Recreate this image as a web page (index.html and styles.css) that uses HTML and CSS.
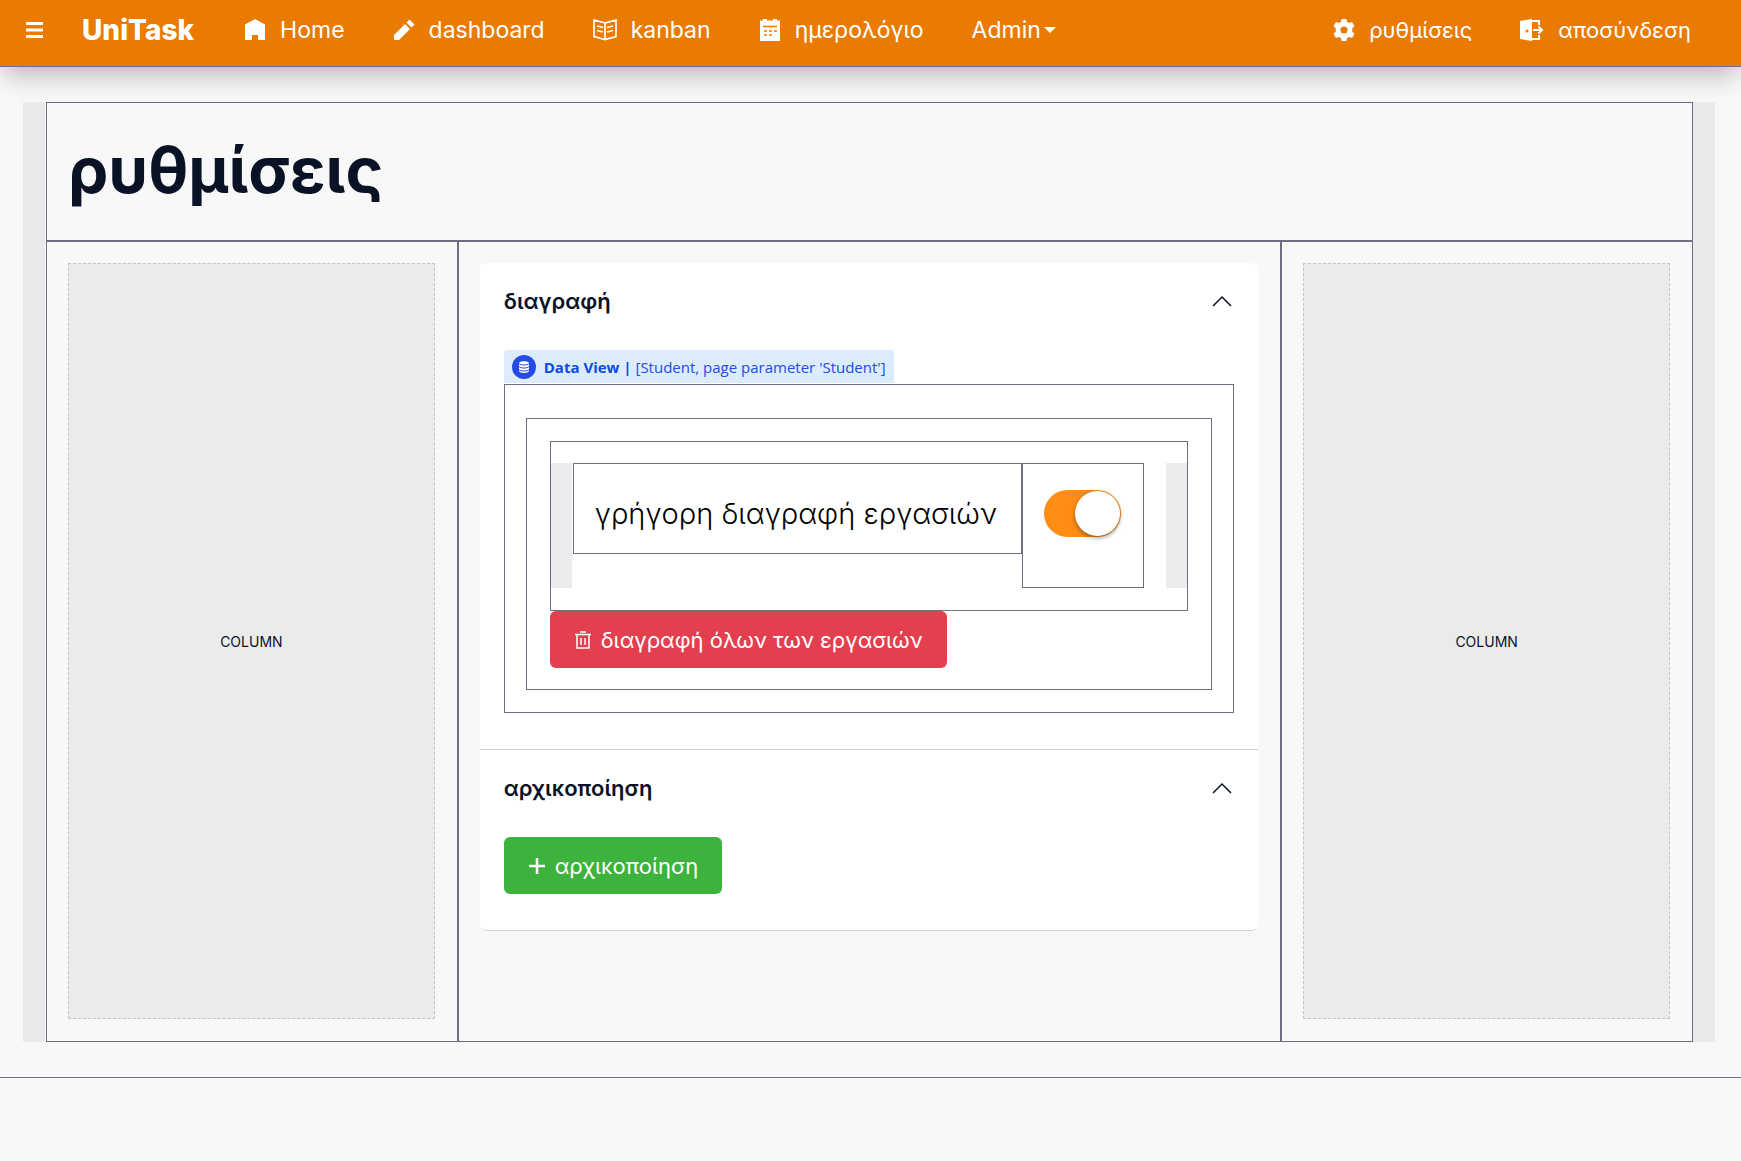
FILE: index.html
```html
<!DOCTYPE html>
<html lang="el">
<head>
<meta charset="utf-8">
<meta name="viewport" content="width=device-width, initial-scale=1">
<title>UniTask</title>
<link rel="stylesheet" href="styles.css">
</head>
<body>
<header class="topbar">
  <button class="menu-button" type="button" aria-label="Menu">
    <svg width="18" height="18" viewBox="0 0 18 18" fill="#fff"><path d="M0 1h17v3H0zM0 7.500h17v3H0zM0 14h17v3H0z"/></svg>
  </button>
  <a class="brand" href="#">UniTask</a>
  <nav class="nav">
    <a class="nav-link" href="#">
      <svg class="icon" viewBox="0 0 22 22" fill="#fff"><path d="M11 0L21 5.500V21h-7v-5H8v5H1V5.500z"/></svg>
      Home</a>
    <a class="nav-link" href="#">
      <svg class="icon" viewBox="0 0 22 22" fill="#fff"><path d="M1 21v-5L12 5l5 5L6 21zM13.500 3.500L16.500.500l5 5-3 3z"/></svg>
      dashboard</a>
    <a class="nav-link" href="#">
      <svg class="icon icon-wide" viewBox="0 0 24 22" fill="none" stroke="#fff" stroke-width="1.700"><path d="M12 4L1 1v16.500l11 3 11-3V1zM12 4v16.500M4 7l6 1.500M4 11.500L10 13M20 7l-6 1.500M20 11.500L14 13"/></svg>
      kanban</a>
    <a class="nav-link" href="#">
      <svg class="icon" viewBox="0 0 22 22"><path fill="#fff" d="M1 1.500h3V0h4v1.500h6V0h4v1.500h3V22H1z"/><path stroke="#e97b02" stroke-width="1.500" d="M4 7.500h14M5 12h3M10 12h3M15 12h3M5 16h3M10 16h3"/></svg>
      ημερολόγιο</a>
    <a class="nav-link nav-drop" href="#">Admin<svg width="12" height="6" viewBox="0 0 12 6" fill="#fff"><path d="M0 0h12L6 6z"/></svg></a>
  </nav>
  <nav class="nav nav-end">
    <a class="nav-link" href="#">
      <svg class="icon" viewBox="0 0 22 22" fill="#fff" fill-rule="evenodd"><path d="M8.500 0h5l.6 3 2 1.100 2.900-1 2.500 4.200-2.200 2v3.400l2.200 2-2.500 4.200-2.900-1-2 1.100-.6 3h-5l-.6-3-2-1.100-2.900 1L.5 14.700l2.200-2V9.300l-2.200-2L3 3.100l2.900 1L7.900 3zM11 7.500a3.500 3.500 0 1 0 0 7 3.500 3.500 0 0 0 0-7z"/></svg>
      ρυθμίσεις</a>
    <a class="nav-link" href="#">
      <svg class="icon icon-wide" viewBox="0 0 24 22"><path fill="#fff" fill-rule="evenodd" d="M0 2L12 0v22L0 20zM7 10.500a1.500 1.500 0 1 0 0 3 1.500 1.500 0 0 0 0-3z"/><path fill="none" stroke="#fff" stroke-width="2" d="M12 2h7v4M12 20h7v-4M13 11h9M18.500 7.500L22 11l-3.500 3.500"/></svg>
      αποσύνδεση</a>
  </nav>
</header>

<main class="page">
  <div class="layout">
    <section class="cell title-cell"><h1 class="title">ρυθμίσεις</h1></section>
    <section class="cell"><div class="placeholder">COLUMN</div></section>
    <section class="cell">
      <div class="card">
        <div class="panel">
          <button class="panel-head" type="button" aria-expanded="true">διαγραφή
            <svg class="chevron" viewBox="0 0 20 12"><path d="M1 11l9-9 9 9"/></svg></button>
          <div class="panel-body">
            <div class="view-tag">
              <svg width="24" height="24" viewBox="0 0 24 24"><circle cx="12" cy="12" r="12" fill="#264ae5"/><path fill="#fff" d="M7 8c0-2.500 10-2.500 10 0v8c0 2.500-10 2.500-10 0z"/><path fill="none" stroke="#264ae5" d="M7 8.500c1 2 9 2 10 0M7 11.500c1 2 9 2 10 0M7 14.500c1 2 9 2 10 0"/></svg>
              <span><b>Data View |</b> [Student, page parameter 'Student']</span>
            </div>
            <div class="view">
              <div class="view-inner">
                <div class="row">
                  <div class="row-cell label-cell"><label for="quick">γρήγορη διαγραφή εργασιών</label></div>
                  <div class="row-cell toggle-cell"><input class="toggle" id="quick" type="checkbox" role="switch" checked></div>
                </div>
                <button class="button danger" type="button">
                  <svg width="16" height="18" viewBox="0 0 16 18" fill="none" stroke="#fff" stroke-width="1.500"><path d="M0 3.500h16M5 1h6M2 3.500v13.500h12V3.500M6 7v7M10 7v7"/></svg>
                  διαγραφή όλων των εργασιών</button>
              </div>
            </div>
          </div>
        </div>
        <div class="panel">
          <button class="panel-head" type="button" aria-expanded="true">αρχικοποίηση
            <svg class="chevron" viewBox="0 0 20 12"><path d="M1 11l9-9 9 9"/></svg></button>
          <div class="panel-body">
            <button class="button success" type="button">
              <svg width="16" height="16" viewBox="0 0 16 16" stroke="#fff" stroke-width="2.500"><path d="M8 0v16M0 8h16"/></svg>
              αρχικοποίηση</button>
          </div>
        </div>
      </div>
    </section>
    <section class="cell"><div class="placeholder">COLUMN</div></section>
  </div>
</main>
</body>
</html>
```
FILE: styles.css
```css
* { box-sizing: border-box; }

body {
  margin: 0;
  min-height: 100vh;
  background: #f8f8f8;
  color: #0a1325;
  font-family: Inter, "Noto Sans", sans-serif;
  font-size: 22px;
}

a { color: inherit; text-decoration: none; }
button { font: inherit; color: inherit; border: 0; cursor: pointer; }
svg { flex: none; }

/* Top bar */
.topbar {
  position: relative;
  display: flex;
  align-items: center;
  height: 67px;
  padding: 0 50px 6px 26px;
  background: #e97b02;
  border-bottom: 1px solid #6c7080;
  box-shadow: 0 10px 28px -4px rgba(0, 0, 0, 0.3);
  color: #fff;
}
.menu-button { display: flex; padding: 0; background: none; }
.brand { margin: 0 50px 0 38px; font-size: 28px; font-weight: 800; }
.nav { display: flex; gap: 48px; font-size: 23px; }
.nav-end { margin-left: auto; font-size: 22px; }
.nav-link { display: flex; align-items: center; gap: 14px; white-space: nowrap; }
.nav-drop { gap: 3px; }
.icon { width: 22px; height: 22px; }
.icon-wide { width: 24px; }

/* Page frame */
.page {
  padding: 35px 26px 35px 23px;
  border-bottom: 1px solid #6c7080;
}
.layout {
  display: grid;
  grid-template-columns: 1fr 2fr 1fr;
  grid-template-rows: 139px minmax(801px, auto);
  padding: 0 22px 0 23px;
  background:
    linear-gradient(#e8eaec, #e8eaec) left / 22px 100% no-repeat,
    linear-gradient(#e8eaec, #e8eaec) right / 22px 100% no-repeat;
}
.cell { min-width: 0; padding: 21px 22px 22px 21px; border: 1px solid #6c7080; }
.title-cell { grid-column: 1 / -1; }
.title { margin: 0; font-size: 64px; line-height: 92px; font-weight: 700; }
.placeholder {
  display: flex;
  align-items: center;
  justify-content: center;
  height: 100%;
  border: 1px dashed #c4c5c9;
  background: #ebebeb;
  font-size: 14px;
}

/* Accordion card */
.card { border-radius: 6px; background: #fff; overflow: hidden; }
.panel { border-bottom: 1px solid #ced0d3; }
.panel:last-child { border-radius: 0 0 6px 6px; }
.panel-head {
  display: flex;
  align-items: center;
  justify-content: space-between;
  width: 100%;
  height: 76px;
  padding: 0 26px 0 24px;
  background: none;
  font-weight: 600;
}
.chevron { width: 20px; height: 12px; fill: none; stroke: #0a1325; stroke-width: 1.500; }
.panel-body { padding: 11px 24px 36px; }
.view-tag {
  display: flex;
  align-items: center;
  gap: 8px;
  width: fit-content;
  height: 33px;
  margin-bottom: 1px;
  padding: 0 8px;
  border-radius: 3px 3px 0 0;
  background: #dcecfd;
  color: #264ae5;
  font-family: "Open Sans", "Noto Sans", sans-serif;
  font-size: 15px;
  white-space: nowrap;
}
.view-tag b { color: #0a4be0; }
.view { padding: 33px 21px 22px; border: 1px solid #6c7080; }
.view-inner { padding: 22px 23px 21px; border: 1px solid #6c7080; }
.row {
  display: flex;
  align-items: flex-start;
  padding: 21px 43px 22px 22px;
  border: 1px solid #6c7080;
  background:
    linear-gradient(#ebecee, #ebecee) left 21px / 21px 125px no-repeat,
    linear-gradient(#ebecee, #ebecee) right 21px / 21px 125px no-repeat;
}
.row-cell { border: 1px solid #6c7080; }
.label-cell {
  flex: 1;
  padding: 26px 21px 16px;
  color: #000;
  font-size: 29px;
  line-height: 47px;
  font-weight: 300;
  white-space: nowrap;
}
.toggle-cell { padding: 26px 22px 50px 21px; }
.toggle {
  appearance: none;
  display: block;
  width: 77px;
  height: 47px;
  margin: 0;
  padding: 1px;
  border-radius: 24px;
  background: #ff8c14;
}
.toggle::before {
  content: "";
  display: block;
  width: 45px;
  height: 45px;
  margin-left: auto;
  border-radius: 50%;
  background: #fff;
  box-shadow: 0 2px 4px rgba(0, 0, 0, 0.4);
}
.button {
  display: flex;
  align-items: center;
  gap: 10px;
  height: 57px;
  padding: 0 24px 0 25px;
  border-radius: 6px;
  color: #fff;
  white-space: nowrap;
}
.danger { background: #e33f4e; }
.success { background: #3db33d; }
```
